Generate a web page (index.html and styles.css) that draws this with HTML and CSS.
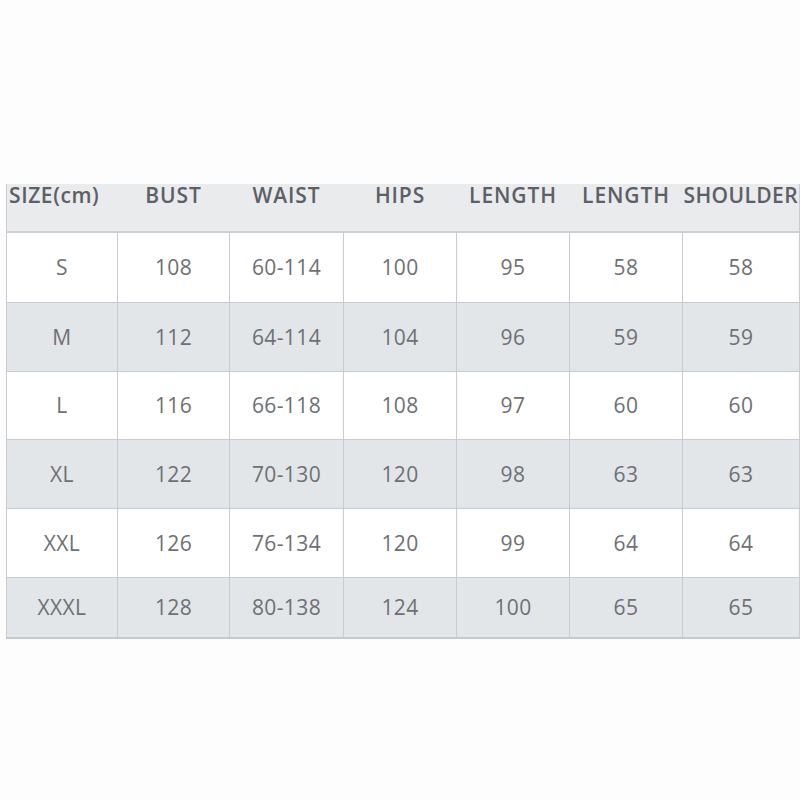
FILE: index.html
```html
<!DOCTYPE html>
<html>
<head>
<meta charset="utf-8">
<link rel="stylesheet" href="styles.css">
</head>
<body>
<div class="page">
<table class="size-table">
<colgroup>
<col class="c1"><col class="c2"><col class="c3"><col class="c4"><col class="c5"><col class="c6"><col class="c7">
</colgroup>
<thead>
<tr class="head">
<th>SIZE(cm)</th><th>BUST</th><th>WAIST</th><th>HIPS</th><th>LENGTH</th><th>LENGTH</th><th>SHOULDER</th>
</tr>
</thead>
<tbody>
<tr class="w"><td>S</td><td>108</td><td>60-114</td><td>100</td><td>95</td><td>58</td><td>58</td></tr>
<tr class="g"><td>M</td><td>112</td><td>64-114</td><td>104</td><td>96</td><td>59</td><td>59</td></tr>
<tr class="w r3"><td>L</td><td>116</td><td>66-118</td><td>108</td><td>97</td><td>60</td><td>60</td></tr>
<tr class="g"><td>XL</td><td>122</td><td>70-130</td><td>120</td><td>98</td><td>63</td><td>63</td></tr>
<tr class="w"><td>XXL</td><td>126</td><td>76-134</td><td>120</td><td>99</td><td>64</td><td>64</td></tr>
<tr class="g last"><td>XXXL</td><td>128</td><td>80-138</td><td>124</td><td>100</td><td>65</td><td>65</td></tr>
</tbody>
</table>
</div>
</body>
</html>
```

FILE: styles.css
```css
html, body {
  margin: 0;
  padding: 0;
  background: #fdfdfd;
}
.page {
  padding: 184px 0 0 6px;
}
.size-table {
  border-collapse: collapse;
  table-layout: fixed;
  width: 793px;
  font-family: "Open Sans", "Noto Sans", sans-serif;
}
.c1 { width: 111px; }
.c2 { width: 112px; }
.c3 { width: 114px; }
.c4 { width: 113px; }
.c5 { width: 113px; }
.c6 { width: 113px; }
.c7 { width: 117px; }
.head {
  background: #e9ebed;
  height: 48px;
}
.head th {
  padding: 0;
  vertical-align: top;
  line-height: 22px;
  font-size: 21px;
  font-weight: 600;
  letter-spacing: 0.9px;
  color: #5c6066;
  white-space: nowrap;
  border-top: none;
  border-left: none;
  border-right: none;
  border-bottom: 2px solid #cdd0d6;
}
.head th:first-child {
  text-align: left;
  padding-left: 2px;
  letter-spacing: 0.6px;
  border-left: 1px solid #c9ccd2;
}
.head th:last-child {
  letter-spacing: 0.4px;
  border-right: 1px solid #c9ccd2;
}
td {
  padding: 0;
  text-align: center;
  vertical-align: middle;
  font-size: 21px;
  font-weight: 400;
  letter-spacing: 0.4px;
  color: #6d7074;
  border: 1px solid #c8cbd3;
}
tr.w { background: #ffffff; height: 69px; }
tr.g { background: #e3e6e9; height: 69px; }
tbody tr:first-child { height: 70px; }
tr.r3 { height: 68px; }
tr.last { height: 61px; }
tr.last td {
  border-bottom: 2px solid #c5c8ce;
  vertical-align: top;
  line-height: 58px;
}
```
